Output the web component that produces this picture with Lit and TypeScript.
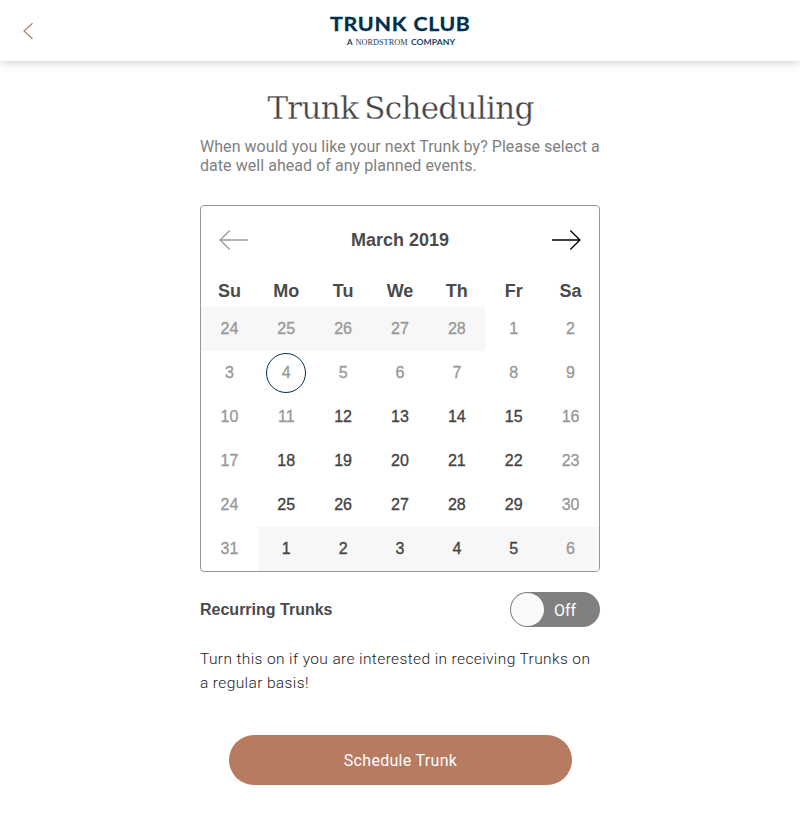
import { LitElement, html, css, svg } from "lit";
import { customElement, property } from "lit/decorators.js";
import { classMap } from "lit/directives/class-map.js";

interface Day {
  n: number;
  outside: boolean;
  open: boolean;
  today: boolean;
}

const DAY_NAMES = ["Su", "Mo", "Tu", "We", "Th", "Fr", "Sa"];

const buildDays = (): Day[] => {
  const days: Day[] = [];
  for (let i = 0; i < 42; i++) {
    const before = i < 5;
    const after = i > 35;
    const n = before ? 24 + i : after ? i - 35 : i - 4;
    const col = i % 7;
    days.push({
      n,
      outside: before || after,
      open: i >= 16 && col !== 0 && col !== 6,
      today: i === 8,
    });
  }
  return days;
};

@customElement("brand-header")
class BrandHeader extends LitElement {
  static styles = css`
    :host { display: block; }
    .bar {
      height: 61px;
      box-sizing: border-box;
      display: grid;
      grid-template-columns: 56px 1fr 56px;
      align-items: center;
      background: #fff;
      box-shadow: 0 0 10px rgba(0, 0, 0, 0.25);
    }
    .back { display: block; margin-left: 22px; }
    .logo { display: block; justify-self: center; }
    .name { font: 700 19px Lato, sans-serif; letter-spacing: 0.6px; fill: #002f4b; stroke: #002f4b; stroke-width: 0.3px; }
    .sub { font: 700 8px Lato, sans-serif; fill: #1d425b; }
    .serif { font: 400 8.5px "Liberation Serif", serif; fill: #1d425b; }
  `;
  render() {
    return html`<header class="bar">
      <svg class="back" width="12" height="18" viewBox="0 0 12 18" fill="none" stroke="#b77b62" stroke-width="1.2">
        <path d="M10.5 1.3L2 9l8.5 7.7" />
      </svg>
      <svg class="logo" width="144" height="61" viewBox="0 0 144 61">
        <text class="name" x="2" y="30.7" textLength="77" lengthAdjust="spacingAndGlyphs">TRUNK</text>
        <text class="name" x="85.5" y="30.7" textLength="57" lengthAdjust="spacingAndGlyphs">CLUB</text>
        <text class="sub" x="19" y="45">A</text>
        <text class="serif" x="27.5" y="45" textLength="52" lengthAdjust="spacingAndGlyphs">NORDSTROM</text>
        <text class="sub" x="83" y="45" textLength="44" lengthAdjust="spacingAndGlyphs">COMPANY</text>
      </svg>
      <span></span>
    </header>`;
  }
}

@customElement("month-calendar")
class MonthCalendar extends LitElement {
  @property() label = "March 2019";
  static styles = css`
    :host { display: block; font-family: "Liberation Sans", Arial, sans-serif; }
    .box {
      box-sizing: border-box;
      height: 367px;
      border: 1px solid #979797;
      border-radius: 4px;
      overflow: hidden;
    }
    .nav {
      height: 68px;
      padding: 0 18px;
      display: flex;
      align-items: center;
      justify-content: space-between;
    }
    .nav svg { display: block; }
    .month { font-size: 18px; font-weight: 700; color: #4a4a4a; }
    .grid { display: grid; grid-template-columns: repeat(7, 1fr); }
    .name {
      height: 33px;
      line-height: 34px;
      text-align: center;
      font-size: 18px;
      font-weight: 700;
      color: #4a4a4a;
    }
    .day {
      height: 44px;
      display: flex;
      align-items: center;
      justify-content: center;
      font-size: 16px;
      color: #999;
      -webkit-text-stroke: 0.35px currentColor;
    }
    .outside { background: #f7f7f7; }
    .open { color: #444; }
    .num {
      box-sizing: border-box;
      width: 40px;
      height: 40px;
      line-height: 38px;
      text-align: center;
      border: 1px solid transparent;
      border-radius: 50%;
    }
    .today .num { border-color: #002f4b; }
  `;
  arrow(forward: boolean) {
    const color = forward ? "#000" : "#999";
    const d = forward ? "M1 10H29M19.3 0.5L29 10L19.3 19.5" : "M29 10H1M10.7 0.5L1 10L10.7 19.5";
    return html`<svg width="30" height="20" viewBox="0 0 30 20" fill="none" stroke=${color} stroke-width="1.3">
      ${svg`<path d=${d} />`}
    </svg>`;
  }
  render() {
    return html`<div class="box">
      <div class="nav">${this.arrow(false)}<span class="month">${this.label}</span>${this.arrow(true)}</div>
      <div class="grid">
        ${DAY_NAMES.map((n) => html`<div class="name">${n}</div>`)}
        ${buildDays().map(
          (d) => html`<div class=${classMap({ day: true, outside: d.outside, open: d.open, today: d.today })}>
            <span class="num">${d.n}</span>
          </div>`
        )}
      </div>
    </div>`;
  }
}

@customElement("app-root")
class AppRoot extends LitElement {
  static styles = css`
    :host {
      display: block;
      min-height: 814px;
      background: #fff;
      font-family: Roboto, "Liberation Sans", sans-serif;
    }
    .page { width: 400px; margin: 0 auto; }
    h1 {
      margin: 0;
      padding-top: 27px;
      height: 49px;
      line-height: 40px;
      text-align: center;
      white-space: nowrap;
      font-family: "DejaVu Serif", serif;
      font-weight: 400;
      font-size: 31px;
      letter-spacing: -0.7px;
      word-spacing: -3px;
      text-indent: 1px;
      color: #444;
      -webkit-text-stroke: 0.3px #fff;
    }
    .intro {
      margin: 0;
      height: 68px;
      font-size: 16px;
      line-height: 19px;
      letter-spacing: 0.05px;
      color: #808080;
      white-space: nowrap;
    }
    .recurring {
      margin-top: 20px;
      height: 35px;
      display: flex;
      align-items: center;
      justify-content: space-between;
    }
    .label {
      font-family: "Liberation Sans", Arial, sans-serif;
      font-weight: 700;
      font-size: 16px;
      color: #4a4a4a;
    }
    .toggle {
      box-sizing: border-box;
      width: 90px;
      height: 35px;
      padding: 1px;
      border-radius: 18px;
      background: #808080;
      display: flex;
      align-items: center;
    }
    .knob { width: 33px; height: 33px; border-radius: 50%; background: #fafafa; }
    .state { margin-left: 10px; padding-top: 1px; font-size: 16px; color: #fff; }
    .note {
      margin: 20px 0 0;
      height: 88px;
      font-size: 15.5px;
      line-height: 24px;
      letter-spacing: 0.38px;
      color: #222;
      font-weight: 300;
      white-space: nowrap;
    }
    .cta {
      display: block;
      width: 343px;
      height: 50px;
      margin: 0 0 0 29px;
      border: 0;
      padding: 0;
      border-radius: 25px;
      background: #b77b62;
      color: #fff;
      font: 400 16px Roboto, sans-serif;
      letter-spacing: 0.3px;
    }
  `;
  render() {
    return html`
      <brand-header></brand-header>
      <main class="page">
        <h1>Trunk Scheduling</h1>
        <p class="intro">When would you like your next Trunk by? Please select a<br />date well ahead of any planned events.</p>
        <month-calendar></month-calendar>
        <div class="recurring">
          <span class="label">Recurring Trunks</span>
          <div class="toggle"><span class="knob"></span><span class="state">Off</span></div>
        </div>
        <p class="note">Turn this on if you are interested in receiving Trunks on<br />a regular basis!</p>
        <button class="cta">Schedule Trunk</button>
      </main>
    `;
  }
}
